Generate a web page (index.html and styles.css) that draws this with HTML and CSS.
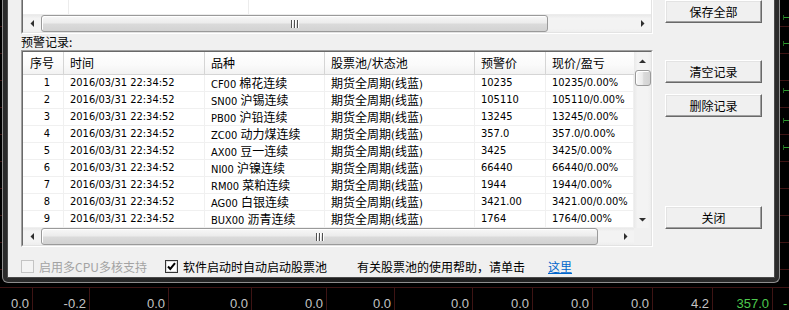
FILE: index.html
```html
<!DOCTYPE html>
<html>
<head>
<meta charset="utf-8">
<title>预警记录</title>
<link rel="stylesheet" href="styles.css">
</head>
<body>
<div class="app">
  <div class="chart">
    <span class="tick t1"></span>
    <span class="tick t2"></span>
    <span class="tick t3"></span>
    <span class="tick t4"></span>
    <span class="tick t5"></span>
    <div class="window">
      <div class="client">
        <div class="left">
          <div class="sunken toplist">
            <div class="sunken-in">
              <div class="toplist-body">
                <span class="tcol tc1"></span><span class="tcol tc2"></span><span class="tcol tc3"></span>
              </div>
              <div class="hscroll">
                <div class="sb-btn"><svg class="arr" width="4" height="7" viewBox="0 0 4 7"><path d="M4 0V7L0.5 3.5Z"/></svg></div>
                <div class="sb-track"><div class="thumb-h thumb-top"><svg class="grip" width="8" height="8" viewBox="0 0 8 8"><path d="M0 0h1v8H0zM3 0h1v8H3zM6 0h1v8H6z" fill="#505050"/><path d="M1 0h1v8H1zM4 0h1v8H4zM7 0h1v8H7z" fill="#fff"/></svg></div></div>
                <div class="sb-btn"><svg class="arr" width="4" height="7" viewBox="0 0 4 7"><path d="M0 0V7L3.5 3.5Z"/></svg></div>
              </div>
            </div>
          </div>
          <div class="label">预警记录:</div>
          <div class="sunken list">
            <div class="sunken-in">
              <div class="list-main">
                <div class="grid">
                  <div class="hd hd-c">序号</div><div class="hd">时间</div><div class="hd">品种</div><div class="hd">股票池/状态池</div><div class="hd">预警价</div><div class="hd hd-last">现价/盈亏</div>

                  <div class="c num">1</div><div class="c">2016/03/31 22:34:52</div><div class="c">CF00 <span class="cn">棉花连续</span></div><div class="c"><span class="cn">期货全周期</span>(<span class="cn">线蓝</span>)</div><div class="c">10235</div><div class="c">10235/0.00%</div>
                  <div class="c num">2</div><div class="c">2016/03/31 22:34:52</div><div class="c">SN00 <span class="cn">沪锡连续</span></div><div class="c"><span class="cn">期货全周期</span>(<span class="cn">线蓝</span>)</div><div class="c">105110</div><div class="c">105110/0.00%</div>
                  <div class="c num">3</div><div class="c">2016/03/31 22:34:52</div><div class="c">PB00 <span class="cn">沪铅连续</span></div><div class="c"><span class="cn">期货全周期</span>(<span class="cn">线蓝</span>)</div><div class="c">13245</div><div class="c">13245/0.00%</div>
                  <div class="c num">4</div><div class="c">2016/03/31 22:34:52</div><div class="c">ZC00 <span class="cn">动力煤连续</span></div><div class="c"><span class="cn">期货全周期</span>(<span class="cn">线蓝</span>)</div><div class="c">357.0</div><div class="c">357.0/0.00%</div>
                  <div class="c num">5</div><div class="c">2016/03/31 22:34:52</div><div class="c">AX00 <span class="cn">豆一连续</span></div><div class="c"><span class="cn">期货全周期</span>(<span class="cn">线蓝</span>)</div><div class="c">3425</div><div class="c">3425/0.00%</div>
                  <div class="c num">6</div><div class="c">2016/03/31 22:34:52</div><div class="c">NI00 <span class="cn">沪镍连续</span></div><div class="c"><span class="cn">期货全周期</span>(<span class="cn">线蓝</span>)</div><div class="c">66440</div><div class="c">66440/0.00%</div>
                  <div class="c num">7</div><div class="c">2016/03/31 22:34:52</div><div class="c">RM00 <span class="cn">菜粕连续</span></div><div class="c"><span class="cn">期货全周期</span>(<span class="cn">线蓝</span>)</div><div class="c">1944</div><div class="c">1944/0.00%</div>
                  <div class="c num">8</div><div class="c">2016/03/31 22:34:52</div><div class="c">AG00 <span class="cn">白银连续</span></div><div class="c"><span class="cn">期货全周期</span>(<span class="cn">线蓝</span>)</div><div class="c">3421.00</div><div class="c">3421.00/0.00%</div>
                  <div class="c num">9</div><div class="c">2016/03/31 22:34:52</div><div class="c">BUX00 <span class="cn">沥青连续</span></div><div class="c"><span class="cn">期货全周期</span>(<span class="cn">线蓝</span>)</div><div class="c">1764</div><div class="c">1764/0.00%</div>
                </div>
                <div class="vscroll">
                  <div class="sb-btn-v"><svg class="arr" width="7" height="4" viewBox="0 0 7 4"><path d="M0 4H7L3.5 0.5Z"/></svg></div>
                  <div class="sb-track-v"><div class="thumb-v"></div></div>
                  <div class="sb-btn-v"><svg class="arr" width="7" height="4" viewBox="0 0 7 4"><path d="M0 0H7L3.5 3.5Z"/></svg></div>
                </div>
              </div>
              <div class="list-bottom">
                <div class="hscroll hscroll-main">
                  <div class="sb-btn"><svg class="arr" width="4" height="7" viewBox="0 0 4 7"><path d="M4 0V7L0.5 3.5Z"/></svg></div>
                  <div class="sb-track"><div class="thumb-h thumb-main"><svg class="grip" width="8" height="8" viewBox="0 0 8 8"><path d="M0 0h1v8H0zM3 0h1v8H3zM6 0h1v8H6z" fill="#505050"/><path d="M1 0h1v8H1zM4 0h1v8H4zM7 0h1v8H7z" fill="#fff"/></svg></div></div>
                  <div class="sb-btn"><svg class="arr" width="4" height="7" viewBox="0 0 4 7"><path d="M0 0V7L3.5 3.5Z"/></svg></div>
                </div>
                <div class="corner"></div>
              </div>
            </div>
          </div>
          <div class="options">
            <div class="opt opt1 disabled">
              <svg class="cb" width="13" height="13" viewBox="0 0 13 13"><rect x="0.5" y="0.5" width="12" height="12" fill="#f4f4f4" stroke="#c4c4c4"/></svg>
              <span>启用多CPU多核支持</span>
            </div>
            <div class="opt opt2">
              <svg class="cb" width="13" height="13" viewBox="0 0 13 13"><rect x="0.5" y="0.5" width="12" height="12" fill="#fff" stroke="#333"/><rect x="1.5" y="1.5" width="10" height="10" fill="none" stroke="#dcdcdc"/><path d="M3 6.5L5.3 9L10 3.2" fill="none" stroke="#000" stroke-width="2"/></svg>
              <span>软件启动时自动启动股票池</span>
            </div>
            <div class="opt opt3">有关股票池的使用帮助，请单击</div>
            <a class="link" href="#">这里</a>
          </div>
        </div>
        <div class="buttons">
          <div class="btn b-save">保存全部</div>
          <div class="btn b-clear">清空记录</div>
          <div class="btn b-del">删除记录</div>
          <div class="btn b-close">关闭</div>
        </div>
      </div>
    </div>
  </div>
  <div class="numbers">
    <div class="n w1">0.0</div>
    <div class="n w2">-0.2</div>
    <div class="n w3">0.0</div>
    <div class="n w4">0.0</div>
    <div class="n w5">0.0</div>
    <div class="n w6">0.0</div>
    <div class="n w7">0.0</div>
    <div class="n w8">0.0</div>
    <div class="n w8">0.0</div>
    <div class="n w8">0.0</div>
    <div class="n w8">4.2</div>
    <div class="n w8 green">357.0</div>
    <div class="n last green">-</div>
  </div>
</div>
</body>
</html>
```

FILE: styles.css
```css
* { box-sizing: border-box; margin: 0; padding: 0; }
html, body { width: 789px; height: 310px; overflow: hidden; background: #000; }
body { font-family: "Noto Sans CJK SC", "Noto Sans", sans-serif; font-size: 12px; color: #000; }

.app { display: flex; flex-direction: column; width: 789px; height: 310px; }

/* dark chart behind the dialog */
.chart {
  position: relative;
  height: 287px;
  flex: none;
  background:
    repeating-linear-gradient(to bottom, transparent 0 26px, #3d1414 26px 27px);
}
.tick { position: absolute; left: 783px; width: 6px; height: 1px; background: #2f9a2f; }
.tick::before { content: ""; position: absolute; left: 0; top: -2px; width: 1px; height: 5px; background: #1f6a1f; }
.t1 { top: 17px; } .t2 { top: 43px; } .t3 { top: 90px; } .t4 { top: 120px; } .t5 { top: 147px; }

.window {
  position: absolute;
  left: 2px; top: 0;
  width: 778px; height: 283px;
  background: linear-gradient(to right, #2a2a2a, #1c1c1c 50%, #2a2a2a);
  border: 1px solid #8e8e8e;
  border-top: none;
  border-radius: 0 0 6px 6px;
  padding: 0 5px 5px 5px;
}
.client {
  display: flex;
  height: 100%;
  background: #f0f0f0;
  padding-left: 13px;
  outline: 1px solid #4a4a4a;
}
.left { width: 632px; flex: none; display: flex; flex-direction: column; }

/* sunken 3D borders */
.sunken { border: 1px solid; border-color: #a0a0a0 #fff #fff #a0a0a0; }
.sunken-in { border: 1px solid; border-color: #696969 #e3e3e3 #e3e3e3 #696969; background: #fff; height: 100%; display: flex; flex-direction: column; }

.toplist { height: 34px; border-top: none; }
.toplist .sunken-in { border-top: none; }
.toplist-body { height: 15px; display: flex; background: #fff; border-bottom: 1px solid #ececec; }
.tcol { display: block; height: 100%; border-right: 1px solid #ececec; }
.tc1 { width: 46px; } .tc2 { width: 180px; } .tc3 { flex: 1; border-right: none; }

.label { height: 16px; line-height: 16px; font-size: 12px; margin-top: 0; }

.list { height: 197px; }
.list-main { display: flex; height: 176px; }
.grid {
  width: 611px;
  display: grid;
  grid-template-columns: 41px 141px 120px 150px 71px 88px;
  grid-template-rows: 23px repeat(9, 17px);
  overflow: hidden;
  font-family: "DejaVu Sans Condensed", "DejaVu Sans", "Noto Sans CJK SC", sans-serif;
  font-stretch: condensed;
  font-size: 11px;
  color: #000;
}
.hd {
  font-family: "Noto Sans CJK SC", sans-serif;
  font-size: 12px;
  line-height: 21px;
  padding-left: 6px;
  background: linear-gradient(#ffffff, #fafafa 60%, #f2f2f2);
  border-right: 1px solid #d5d5d5;
  border-bottom: 1px solid #d5d5d5;
  white-space: nowrap;
}
.hd-c { padding-left: 7px; }
.hd-last { border-right: none; }
.c {
  padding-left: 6px;
  line-height: 16px;
  white-space: nowrap;
  overflow: hidden;
  border-right: 1px solid #f0f0f0;
  border-bottom: 1px solid #f0f0f0;
}
.c.num { text-align: center; padding-left: 8px; }
.cn { font-family: "Noto Sans CJK SC", sans-serif; font-size: 12px; }

/* scrollbars */
.hscroll { display: flex; height: 17px; background: linear-gradient(#e9e9e9, #f3f3f3 20%, #f3f3f3 80%, #eeeeee); }
.hscroll-main { width: 611px; }
.sb-btn { width: 17px; flex: none; display: flex; align-items: center; justify-content: center; }
.sb-track { flex: 1; padding: 0 0 0 1px; }
.arr { fill: #2f2f2f; display: block; }
.thumb-h {
  height: 17px;
  border: 1px solid #9a9a9a;
  border-radius: 3px;
  background: linear-gradient(#f7f7f7, #ececec 45%, #dadada 55%, #d2d2d2);
  box-shadow: inset 1px 1px #fff;
  display: flex; align-items: center; justify-content: center;
}
.thumb-top { width: 507px; }
.thumb-main { width: 557px; }
.grip { display: block; }

.vscroll { width: 17px; flex: none; display: flex; flex-direction: column; background: linear-gradient(to right, #e9e9e9, #f3f3f3 20%, #f3f3f3 80%, #eeeeee); }
.sb-btn-v { height: 17px; flex: none; display: flex; align-items: center; justify-content: center; }
.sb-track-v { flex: 1; padding-top: 1px; }
.thumb-v {
  width: 16px; height: 16px; margin-left: 1px;
  border: 1px solid #9a9a9a;
  border-radius: 3px;
  background: linear-gradient(to right, #f7f7f7, #ececec 45%, #dadada 55%, #d2d2d2);
  box-shadow: inset 1px 1px #fff;
}
.list-bottom { display: flex; height: 17px; }
.corner { width: 17px; background: #f0f0f0; }

/* options row */
.options { display: flex; align-items: center; height: 14px; margin-top: 12px; font-size: 12px; white-space: nowrap; }
.opt { display: flex; align-items: center; gap: 5px; }
.cb { display: block; flex: none; }
.opt1 { width: 144px; }
.opt1.disabled { color: #a3a3a3; }
.opt2 { width: 192px; }
.opt3 { width: 191px; }
.link { color: #0066cc; text-decoration: underline; }

/* buttons */
.buttons { width: 97px; flex: none; margin-left: 12px; display: flex; flex-direction: column; }
.btn {
  height: 23px;
  font-size: 12px;
  line-height: 21px;
  text-align: center;
  background: #f0f0f0;
  border: 1px solid;
  border-color: #fff #696969 #696969 #fff;
  box-shadow: inset -1px -1px #a0a0a0, inset 1px 1px #e3e3e3;
}
.b-clear { margin-top: 37px; }
.b-del { margin-top: 11px; }
.b-close { margin-top: 89px; }

/* numbers row */
.numbers { display: flex; height: 23px; border-top: 1px solid #3d1414; font-family: "Liberation Sans", Arial, sans-serif; font-size: 13px; color: #c4c4c4; }
.n { text-align: right; padding-right: 3px; padding-top: 8px; line-height: 15px; border-right: 1px solid #3d1414; flex: none; }
.w1 { width: 33px; } .w2 { width: 57px; } .w3 { width: 79px; } .w4 { width: 83px; }
.w5 { width: 75px; } .w6 { width: 68px; } .w7 { width: 78px; } .w8 { width: 60px; }
.n.last { flex: 1; border-right: none; text-align: left; padding-left: 10px; }
.green { color: #4ec94e; }
```
